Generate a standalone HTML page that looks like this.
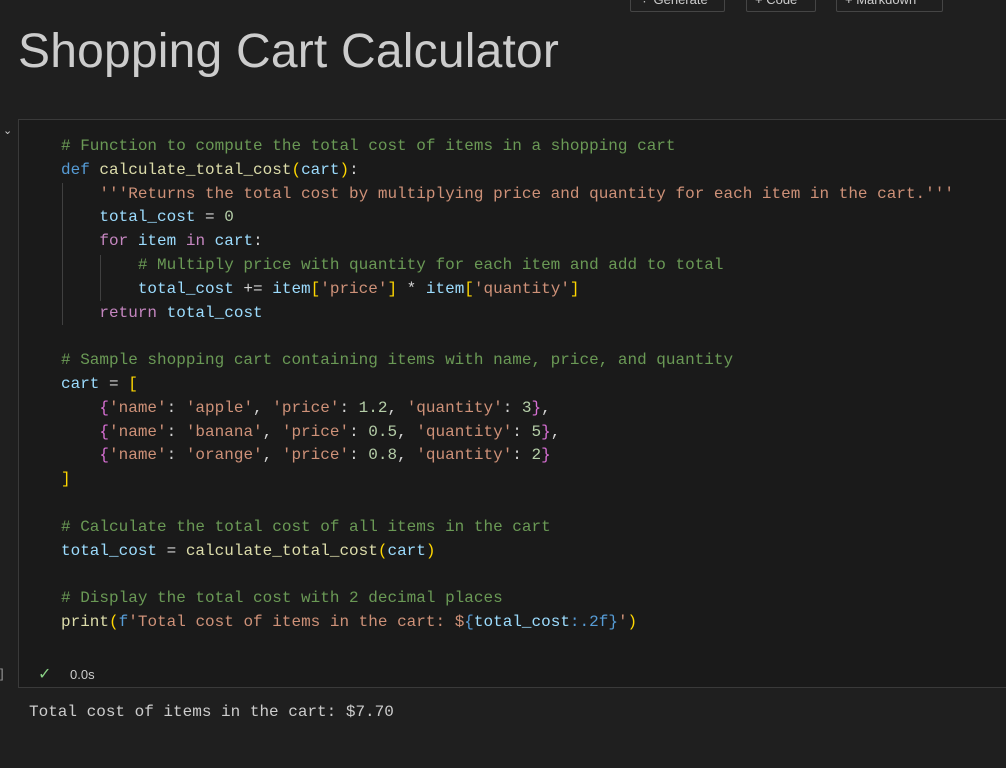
<!DOCTYPE html>
<html><head><meta charset="utf-8"><style>
body{margin:0;width:1006px;height:768px;background:#1f1f1f;overflow:hidden;position:relative;font-family:"Liberation Sans",sans-serif}
.btn{position:absolute;top:-8px;height:20px;border:1px solid #454545;border-radius:2px;color:#ccc;font-size:13px;line-height:14px;padding:0 8px;box-sizing:border-box}
h1{position:absolute;left:18px;top:24px;margin:0;font-weight:normal;font-size:48px;color:#cccccc;letter-spacing:0.2px}
.cell{position:absolute;left:18px;top:119px;width:1000px;height:569px;border:1px solid #3a3a3a;background:#1a1a1a;box-sizing:border-box}
pre{position:absolute;left:61px;top:135px;margin:0;font-family:"Liberation Mono",monospace;font-size:16px;line-height:23.8px;color:#d4d4d4}
.c{color:#6a9955}.k{color:#569cd6}.f{color:#dcdcaa}.v{color:#9cdcfe}.s{color:#ce9178}.p{color:#c586c0}.y{color:#ffd700}.m{color:#da70d6}.n{color:#b5cea8}
.g{position:absolute;width:1px;background:#404040}
</style></head><body>
<div class="btn" style="left:630px;width:95px">⁘ Generate</div>
<div class="btn" style="left:746px;width:70px">+ Code</div>
<div class="btn" style="left:836px;width:107px">+ Markdown</div>
<h1>Shopping Cart Calculator</h1>
<div style="position:absolute;left:3px;top:124px;color:#ccc;font-size:11px">⌄</div>
<div class="cell"></div>
<div class="g" style="left:62px;top:183px;height:142px"></div>
<div class="g" style="left:100px;top:255px;height:46px"></div>
<pre><span class="c"># Function to compute the total cost of items in a shopping cart</span>
<span class="k">def</span> <span class="f">calculate_total_cost</span><span class="y">(</span><span class="v">cart</span><span class="y">)</span>:
    <span class="s">'''Returns the total cost by multiplying price and quantity for each item in the cart.'''</span>
    <span class="v">total_cost</span> = <span class="n">0</span>
    <span class="p">for</span> <span class="v">item</span> <span class="p">in</span> <span class="v">cart</span>:
        <span class="c"># Multiply price with quantity for each item and add to total</span>
        <span class="v">total_cost</span> += <span class="v">item</span><span class="y">[</span><span class="s">'price'</span><span class="y">]</span> * <span class="v">item</span><span class="y">[</span><span class="s">'quantity'</span><span class="y">]</span>
    <span class="p">return</span> <span class="v">total_cost</span>

<span class="c"># Sample shopping cart containing items with name, price, and quantity</span>
<span class="v">cart</span> = <span class="y">[</span>
    <span class="m">{</span><span class="s">'name'</span>: <span class="s">'apple'</span>, <span class="s">'price'</span>: <span class="n">1.2</span>, <span class="s">'quantity'</span>: <span class="n">3</span><span class="m">}</span>,
    <span class="m">{</span><span class="s">'name'</span>: <span class="s">'banana'</span>, <span class="s">'price'</span>: <span class="n">0.5</span>, <span class="s">'quantity'</span>: <span class="n">5</span><span class="m">}</span>,
    <span class="m">{</span><span class="s">'name'</span>: <span class="s">'orange'</span>, <span class="s">'price'</span>: <span class="n">0.8</span>, <span class="s">'quantity'</span>: <span class="n">2</span><span class="m">}</span>
<span class="y">]</span>

<span class="c"># Calculate the total cost of all items in the cart</span>
<span class="v">total_cost</span> = <span class="f">calculate_total_cost</span><span class="y">(</span><span class="v">cart</span><span class="y">)</span>

<span class="c"># Display the total cost with 2 decimal places</span>
<span class="f">print</span><span class="y">(</span><span class="k">f</span><span class="s">'Total cost of items in the cart: $</span><span class="k">{</span><span class="v">total_cost</span><span class="k">:.2f}</span><span class="s">'</span><span class="y">)</span></pre>
<div style="position:absolute;left:0;top:666px;color:#999;font-size:13px">]</div>
<div style="position:absolute;left:38px;top:664px;color:#89d185;font-size:16px">✓</div>
<div style="position:absolute;left:70px;top:667px;color:#ccc;font-size:13px">0.0s</div>
<div style="position:absolute;left:29px;top:703px;color:#ccc;font-family:'Liberation Mono',monospace;font-size:16px">Total cost of items in the cart: $7.70</div>
</body></html>
